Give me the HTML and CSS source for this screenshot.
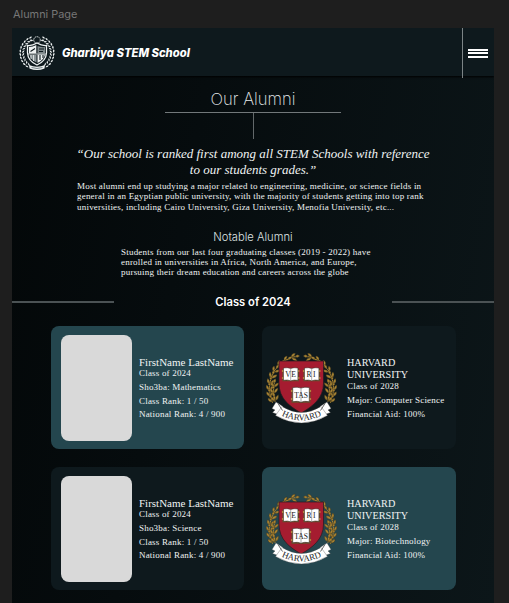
FILE: index.html
```html
<!DOCTYPE html>
<html lang="en">
<head>
<meta charset="utf-8">
<title>Alumni Page</title>
<link rel="stylesheet" href="styles.css">
</head>
<body>
<svg class="defs" width="0" height="0" aria-hidden="true">
  <defs>
    <g id="sprig">
      <path d="M7 46Q7.500 42 8 39" fill="none" stroke="#b08a35" stroke-width=".9"/>
      <path d="M7 45Q3 43.500 4.500 40Q7.500 41.500 7 45ZM8 45Q8 41 12 40Q12 44 8 45ZM7.500 41Q5 38.500 8 36.500Q10 39 7.500 41Z" fill="#a98535" stroke="#332b17" stroke-width=".35"/>
    </g>
    <g id="branch">
      <use href="#sprig" transform="rotate(-22 39.500 43)"/>
      <use href="#sprig" transform="rotate(-11 39.500 43)"/>
      <use href="#sprig"/>
      <use href="#sprig" transform="rotate(11 39.500 43)"/>
      <use href="#sprig" transform="rotate(22 39.500 43)"/>
      <use href="#sprig" transform="rotate(34 39.500 43)"/>
      <use href="#sprig" transform="rotate(47 39.500 43)"/>
      <use href="#sprig" transform="rotate(61 39.500 43)"/>
      <use href="#sprig" transform="rotate(75 39.500 43)"/>
      <use href="#sprig" transform="translate(4 2) rotate(-16 39.500 43)"/>
      <use href="#sprig" transform="translate(4 2) rotate(-2 39.500 43)"/>
      <use href="#sprig" transform="translate(4 2) rotate(9 39.500 43)"/>
    </g>
    <g id="book">
      <path d="M-8.300-5.500H8.300V6.800H-8.300Z" fill="#6b4d2c"/>
      <path d="M-7.200-6.500Q-3-7.300 0-6Q3-7.300 7.200-6.500V5.800Q3 5 0 6.300Q-3 5-7.200 5.800Z" fill="#fff" stroke="#30251c" stroke-width=".5"/>
      <path d="M0-6V6.300" stroke="#777" stroke-width=".6"/>
      <path d="M-8.800-3.500H-7.500M-8.800 3.500H-7.500M7.500-3.500H8.800M7.500 3.500H8.800" stroke="#c49b43" stroke-width="1.300"/>
    </g>
    <path id="motto" d="M15 68.300Q39.500 82.500 64 68.300"/>
    <g id="crest">
      <use href="#branch"/>
      <use href="#branch" transform="translate(79 0) scale(-1 1)"/>
      <path d="M17 16H61.500V38C61.500 54 50 61.500 39.200 68C28 61.500 17 54 17 38Z" fill="#a51c30" stroke="#251b20" stroke-width=".7"/>
      <use href="#book" transform="translate(28.700 29.500)"/>
      <use href="#book" transform="translate(49.700 29.500)"/>
      <use href="#book" transform="translate(39 50) scale(1.150)"/>
      <g class="crest-letters">
        <text x="26" y="32.300">V</text><text x="31.600" y="32.300">E</text>
        <text x="47" y="32.300">R</text><text x="52.300" y="32.300">I</text>
        <text x="39" y="52.800">TAS</text>
      </g>
      <path d="M14 57L21 61.500L20 71L16 69.500L10.500 67.500L13 65L10 63.500ZM65 57L58 61.500L59 71L63 69.500L68.500 67.500L66 65L69 63.500Z" fill="#fff" stroke="#444" stroke-width=".35"/>
      <path d="M20 61.500Q39.500 73.500 59 61.500L65.500 70.500Q39.500 85.500 13.500 70.500Z" fill="#fff" stroke="#444" stroke-width=".35"/>
      <path d="M16 58.500L20.500 65.500M63 58.500L58.500 65.500" stroke="#666" stroke-width="1"/>
      <text class="crest-motto"><textPath href="#motto" startOffset="50%">HARVARD</textPath></text>
    </g>
    <g id="leafpair"><path d="M8.500 24.500Q6.500 22.500 8 21Q9.800 22.500 8.500 24.500ZM10 24.500Q10 22 12.300 21.500Q12.300 24 10 24.500Z"/></g>
    <g id="laurel">
      <use href="#leafpair" transform="rotate(-54 25 23)"/>
      <use href="#leafpair" transform="rotate(-42 25 23)"/>
      <use href="#leafpair" transform="rotate(-30 25 23)"/>
      <use href="#leafpair" transform="rotate(-18 25 23)"/>
      <use href="#leafpair" transform="rotate(-6 25 23)"/>
      <use href="#leafpair" transform="rotate(6 25 23)"/>
      <use href="#leafpair" transform="rotate(18 25 23)"/>
      <use href="#leafpair" transform="rotate(30 25 23)"/>
      <use href="#leafpair" transform="rotate(42 25 23)"/>
      <use href="#leafpair" transform="rotate(54 25 23)"/>
      <use href="#leafpair" transform="rotate(66 25 23)"/>
    </g>
  </defs>
</svg>

<div class="frame-label">Alumni Page</div>
<main class="page">
  <header class="topbar">
    <svg class="logo" viewBox="7 5 36 36" fill="#eef2f2">
      <use href="#laurel"/>
      <use href="#laurel" transform="translate(50 0) scale(-1 1)"/>
      <circle cx="25" cy="10" r="3.300" fill="none" stroke="#dce1e1" stroke-width="1" stroke-dasharray="1.500 .6"/>
      <path d="M15.500 15.500Q20 16 25 13Q30 16 34.500 15.500V23Q34 31 25 35Q16 31 15.500 23Z" fill="#0e191d" stroke="#eef2f2" stroke-width="1.300"/>
      <path d="M17 17Q21 17 24.300 15V23.500H17Z"/>
      <path d="M25.500 24.500H33Q32 30 25.500 33Z"/>
      <path d="M25.500 16Q29 17.500 33 17V23.500H25.500Z" fill="#7e888a"/>
      <path d="M17.500 25H24.500V32.500Q18.500 30 17.500 25Z" fill="#899395"/>
      <path d="M18.500 21.500L23 18.500M27 19H32M27 21.500H31M28 25V30M31 25V28" stroke="#0e191d" stroke-width="1.100"/>
      <path d="M19 25V29M21.500 25V31M16 24H34" stroke="#eef2f2" stroke-width=".8"/>
      <path d="M17 35Q25 38.500 33 35L32.500 38.500Q25 41.500 17.500 38.500Z"/>
      <path d="M19.500 37.500Q25 39.400 30.500 37.500" fill="none" stroke="#56656a" stroke-width=".8"/>
    </svg>
    <div class="brand">Gharbiya STEM School</div>
    <div class="menu"><span></span><span></span><span></span></div>
  </header>

  <section class="intro">
    <h1>Our Alumni</h1>
    <div class="rule"></div>
    <div class="stem"></div>
    <blockquote>“Our school is ranked first among all STEM Schools with reference<br>to our students grades.”</blockquote>
    <p class="lead">Most alumni end up studying a major related to engineering, medicine, or science fields in<br>general in an Egyptian public university, with the majority of students getting into top rank<br>universities, including Cairo University, Giza University, Menofia University, etc...</p>
    <h2>Notable Alumni</h2>
    <p class="notable">Students from our last four graduating classes (2019 - 2022) have<br>enrolled in universities in Africa, North America, and Europe,<br>pursuing their dream education and careers across the globe</p>
  </section>

  <div class="divider"><i></i><h3>Class of 2024</h3><i></i></div>

  <section class="cards">
    <article class="card accent">
      <div class="photo"></div>
      <div class="info"><h4>FirstName LastName</h4><p>Class of 2024</p><p>Sho3ba: Mathematics</p><p>Class Rank: 1 / 50</p><p>National Rank: 4 / 900</p></div>
    </article>
    <article class="card">
      <svg class="crest" viewBox="0 0 80 85"><use href="#crest"/></svg>
      <div class="info uni"><h4>HARVARD<br>UNIVERSITY</h4><p>Class of 2028</p><p>Major: Computer Science</p><p>Financial Aid: 100%</p></div>
    </article>
    <article class="card">
      <div class="photo"></div>
      <div class="info"><h4>FirstName LastName</h4><p>Class of 2024</p><p>Sho3ba: Science</p><p>Class Rank: 1 / 50</p><p>National Rank: 4 / 900</p></div>
    </article>
    <article class="card accent">
      <svg class="crest" viewBox="0 0 80 85"><use href="#crest"/></svg>
      <div class="info uni"><h4>HARVARD<br>UNIVERSITY</h4><p>Class of 2028</p><p>Major: Biotechnology</p><p>Financial Aid: 100%</p></div>
    </article>
  </section>
</main>
</body>
</html>
```
FILE: styles.css
```css
* { box-sizing: border-box; margin: 0; padding: 0; }
body {
  height: 603px;
  overflow: hidden;
  background: #1e1e1e;
  color: #f0f3f3;
  font-family: "Liberation Serif", serif;
}
.defs { display: block; height: 0; }
.frame-label {
  height: 28px;
  padding: 7px 0 0 13px;
  font: 10.9px/15px Inter, sans-serif;
  color: #777;
}
.page {
  width: 482px;
  height: 575px;
  margin-left: 12px;
  overflow: hidden;
  background: linear-gradient(100deg, #030708 0%, #060c0e 35%, #0c1619 100%);
}
.topbar {
  display: flex;
  align-items: center;
  height: 48px;
  padding-left: 7px;
  background: #0e191d;
  box-shadow: 0 1px 2px #000;
}
.logo { width: 36px; height: 36px; margin-top: 2px; }
.brand {
  flex: 1;
  margin: 2px 0 0 7px;
  font: italic 800 11.25px/16px Inter, sans-serif;
  color: #fff;
  white-space: nowrap;
}
.menu {
  display: flex;
  flex-direction: column;
  align-items: center;
  justify-content: center;
  gap: 1.5px;
  width: 32px;
  height: 50px;
  padding-right: 2px;
  align-self: flex-start;
  border-left: 1px solid #7c8486;
}
.menu span { width: 20px; height: 2px; background: #fff; }

.intro { display: flex; flex-direction: column; align-items: center; height: 211px; }
h1 {
  height: 36px;
  padding-top: 11px;
  font: 200 16.6px/24px Inter, sans-serif;
  color: #e6eaea;
}
.rule { width: 176px; height: 1px; background: #72787a; }
.stem { width: 1px; height: 26px; background: #62686a; }
blockquote {
  margin-top: 7px;
  text-align: center;
  font-style: italic;
  font-size: 13px;
  line-height: 16px;
  white-space: nowrap;
}
.lead, .notable {
  width: 352px;
  font-size: 9px;
  line-height: 10.3px;
  letter-spacing: .21px;
  white-space: nowrap;
}
.lead { margin-top: 3px; }
h2 { margin-top: 17px; font: 300 11.2px/16px Inter, sans-serif; color: #dfe3e3; }
.notable { width: 264px; margin-top: 2px; }

.divider { display: flex; align-items: center; justify-content: space-between; height: 30px; }
.divider i { width: 102px; height: 1.5px; background: #4b5254; }
h3 { font: 600 11.2px/16px Inter, sans-serif; color: #fff; }

.cards { display: grid; grid-template-columns: 193px 193.5px; gap: 18px; padding: 9px 0 0 39px; }
.card { display: flex; height: 123px; border-radius: 8px; background: #0e191d; }
.card.accent { background: #24464e; }
.photo { width: 71px; height: 106px; margin: 9px 0 0 10px; border-radius: 8px; background: #d9d9d9; }
.crest { width: 80px; height: 85px; margin-top: 19px; }
.crest-letters { font: 7.6px "Liberation Serif", serif; fill: #222; text-anchor: middle; }
.crest-motto { font: 8.8px "Liberation Serif", serif; fill: #222; text-anchor: middle; }
.info { padding: 30px 0 0 7px; white-space: nowrap; }
h4 { font-size: 11px; font-weight: 400; line-height: 12px; }
.info p { font-size: 9px; line-height: 13.7px; letter-spacing: .19px; }
.info h4 + p { line-height: 10px; margin-bottom: 3px; }
.info.uni { padding: 31px 0 0 5px; }
.uni h4 { font-size: 10.2px; }
```
